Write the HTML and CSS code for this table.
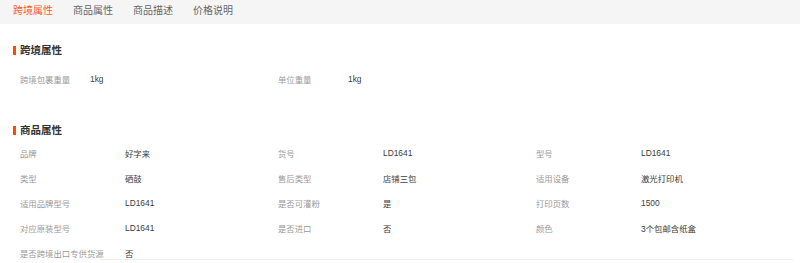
FILE: index.html
```html
<!DOCTYPE html>
<html lang="zh-CN">
<head>
  <meta charset="UTF-8">
  <title>商品详情 — 属性</title>
  <link rel="stylesheet" href="styles.css">
</head>
<body>

  <!-- tab bar -->
  <div class="tabs">
    <a class="tab active">跨境属性</a>
    <a class="tab">商品属性</a>
    <a class="tab">商品描述</a>
    <a class="tab">价格说明</a>
  </div>

  <!-- cross-border attributes -->
  <div class="section section-cb">
    <h3 class="sec-title">跨境属性</h3>
    <div class="attrs attrs-cb">
      <div class="attr"><span class="k">跨境包裹重量</span><span class="v">1kg</span></div>
      <div class="attr"><span class="k">单位重量</span><span class="v">1kg</span></div>
    </div>
  </div>

  <!-- product attributes -->
  <div class="section section-prod">
    <h3 class="sec-title">商品属性</h3>
    <div class="attrs attrs-prod">
      <div class="attr"><span class="k">品牌</span><span class="v">好字来</span></div>
      <div class="attr"><span class="k">货号</span><span class="v">LD1641</span></div>
      <div class="attr"><span class="k">型号</span><span class="v">LD1641</span></div>

      <div class="attr"><span class="k">类型</span><span class="v">硒鼓</span></div>
      <div class="attr"><span class="k">售后类型</span><span class="v">店铺三包</span></div>
      <div class="attr"><span class="k">适用设备</span><span class="v">激光打印机</span></div>

      <div class="attr"><span class="k">适用品牌型号</span><span class="v">LD1641</span></div>
      <div class="attr"><span class="k">是否可灌粉</span><span class="v">是</span></div>
      <div class="attr"><span class="k">打印页数</span><span class="v">1500</span></div>

      <div class="attr"><span class="k">对应原装型号</span><span class="v">LD1641</span></div>
      <div class="attr"><span class="k">是否进口</span><span class="v">否</span></div>
      <div class="attr"><span class="k">颜色</span><span class="v">3个包邮含纸盒</span></div>

      <div class="attr"><span class="k">是否跨境出口专供货源</span><span class="v">否</span></div>
    </div>
  </div>

  <div class="fold-line"></div>

</body>
</html>
```

FILE: styles.css
```css
body {
  margin:0; background:#fff; color:#333;
  font-family:"Liberation Sans","Noto Sans CJK SC",sans-serif;
  position:relative; height:263px; overflow:hidden;
}

/* Tabs */
.tabs {
  display:flex; gap:20px; height:24px; padding-left:13px;
  background:#f5f5f5;
}
.tab {
  font-size:10px; line-height:21px; color:#666; cursor:pointer;
}
.tab.active { color:#ff5a1e; }

/* Sections */
.section { padding-left:13px; }
.section-cb { padding-top:19px; }
.section-prod { padding-top:32px; }

.sec-title {
  margin:0; display:flex; align-items:center;
  font-size:10.5px; line-height:14px; font-weight:bold; color:#333;
}
.sec-title::before {
  content:""; width:3px; height:9px; background:#ff4a00;
  margin-right:4px;
}

.attrs { display:grid; padding-left:7px; }
.attrs-cb { grid-template-columns:258px 258px; margin-top:9px; }
.attrs-prod { grid-template-columns:258px 258px 258px; margin-top:3px; }

.attr {
  display:flex; align-items:center; height:25px;
  font-size:8.4px; white-space:nowrap;
}
.attr .k { color:#9a9a9a; flex:none; }
.attrs-cb .k { width:70px; }
.attrs-prod .k { width:105px; }
.attr .v { color:#3c3c3c; }

.fold-line {
  position:absolute; left:100px; right:7px; top:259px;
  height:1px; background:#eee;
}
```
